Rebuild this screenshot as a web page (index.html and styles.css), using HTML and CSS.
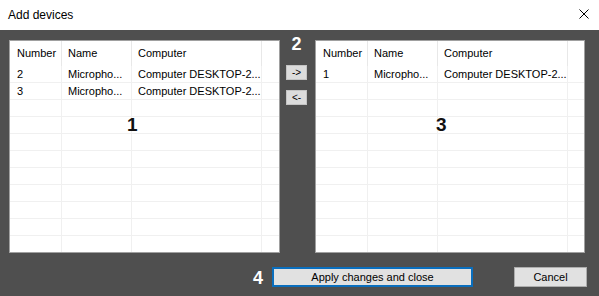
FILE: index.html
```html
<!DOCTYPE html>
<html lang="en">
<head>
<meta charset="UTF-8" />
<title>Add devices</title>
<link rel="stylesheet" href="styles.css">
</head>
<body>
<div class="window">
  <header class="titlebar">
    <span class="title">Add devices</span>
    <button class="close" aria-label="Close">
      <svg width="10" height="10" viewBox="0 0 10 10"><path d="M0.5 0.5L9.5 9.5M9.5 0.5L0.5 9.5" stroke="#000" stroke-width="1" fill="none"/></svg>
    </button>
  </header>

  <main class="content">
    <div class="lists">
      <div class="list list-left">
        <table class="grid">
          <colgroup><col class="c-num"><col class="c-name"><col class="c-comp"><col></colgroup>
          <thead>
            <tr><th>Number</th><th>Name</th><th>Computer</th><th></th></tr>
          </thead>
          <tbody>
            <tr><td>2</td><td>Micropho...</td><td>Computer DESKTOP-2...</td><td></td></tr>
            <tr><td>3</td><td>Micropho...</td><td>Computer DESKTOP-2...</td><td></td></tr>
            <tr><td></td><td></td><td></td><td></td></tr>
            <tr><td></td><td></td><td></td><td></td></tr>
            <tr><td></td><td></td><td></td><td></td></tr>
            <tr><td></td><td></td><td></td><td></td></tr>
            <tr><td></td><td></td><td></td><td></td></tr>
            <tr><td></td><td></td><td></td><td></td></tr>
            <tr><td></td><td></td><td></td><td></td></tr>
            <tr><td></td><td></td><td></td><td></td></tr>
            <tr><td></td><td></td><td></td><td></td></tr>
          </tbody>
        </table>
        <span class="marker">1</span>
      </div>

      <div class="mover">
        <span class="step">2</span>
        <button class="arrow">-&gt;</button>
        <button class="arrow">&lt;-</button>
      </div>

      <div class="list list-right">
        <table class="grid">
          <colgroup><col class="c-num"><col class="c-name"><col class="c-comp"><col></colgroup>
          <thead>
            <tr><th>Number</th><th>Name</th><th>Computer</th><th></th></tr>
          </thead>
          <tbody>
            <tr><td>1</td><td>Micropho...</td><td>Computer DESKTOP-2...</td><td></td></tr>
            <tr><td></td><td></td><td></td><td></td></tr>
            <tr><td></td><td></td><td></td><td></td></tr>
            <tr><td></td><td></td><td></td><td></td></tr>
            <tr><td></td><td></td><td></td><td></td></tr>
            <tr><td></td><td></td><td></td><td></td></tr>
            <tr><td></td><td></td><td></td><td></td></tr>
            <tr><td></td><td></td><td></td><td></td></tr>
            <tr><td></td><td></td><td></td><td></td></tr>
            <tr><td></td><td></td><td></td><td></td></tr>
            <tr><td></td><td></td><td></td><td></td></tr>
          </tbody>
        </table>
        <span class="marker">3</span>
      </div>
    </div>

    <div class="actions">
      <span class="step">4</span>
      <button class="btn apply">Apply changes and close</button>
      <button class="btn cancel">Cancel</button>
    </div>
  </main>
</div>
</body>
</html>
```

FILE: styles.css
```css
:root {
  --dark-bg: #4f4f4f;
  --button-bg: #e1e1e1;
  --button-border: #adadad;
  --grid-line: #f0f0f0;
  --focus-blue: #0a6ebd;
  --font-family: 'Liberation Sans', Arial, sans-serif;
}

* {
  box-sizing: border-box;
}

body {
  margin: 0;
  font-family: var(--font-family);
  color: #000;
  background: var(--dark-bg);
}

.window {
  width: 599px;
  height: 296px;
  display: flex;
  flex-direction: column;
  overflow: hidden;
}

.titlebar {
  height: 30px;
  background: #fff;
  display: flex;
  align-items: center;
  padding: 0 10px 0 8px;
}

.title {
  font-size: 12px;
  line-height: 14px;
  margin-top: -1px;
}

.close {
  margin-left: auto;
  border: none;
  background: none;
  padding: 0;
  width: 10px;
  height: 10px;
  display: flex;
  margin-top: -2px;
}

.content {
  flex: 1;
  background: var(--dark-bg);
  padding: 6px 14px 0 9px;
}

.lists {
  display: flex;
  align-items: flex-start;
}

.list {
  position: relative;
  height: 213px;
  margin-top: 4px;
  background: #fff;
  border: 1px solid #a0a0a0;
  overflow: hidden;
}

.list-left {
  width: 271px;
}

.list-right {
  width: 270px;
}

.grid {
  width: 100%;
  table-layout: fixed;
  border-collapse: separate;
  border-spacing: 0;
  font-size: 11px;
}

.c-num {
  width: 52px;
}

.c-name {
  width: 70px;
}

.c-comp {
  width: 130px;
}

.grid th,
.grid td {
  padding: 0 0 0 6px;
  text-align: left;
  font-weight: normal;
  white-space: nowrap;
  overflow: hidden;
  border-right: 1px solid var(--grid-line);
}

.grid th:last-child,
.grid td:last-child {
  border-right: none;
}

.grid th:first-child,
.grid td:first-child {
  padding-left: 7px;
}

.grid th {
  height: 25px;
  line-height: 25px;
  border-right-color: #e8e8e8;
}

.grid td {
  height: 17px;
  line-height: 16px;
  border-bottom: 1px solid var(--grid-line);
}

.marker {
  position: absolute;
  left: 117px;
  top: 74px;
  font-size: 19px;
  line-height: 19px;
  font-weight: 700;
  color: #111;
}

.list-right .marker {
  left: 120px;
}

.mover {
  width: 35px;
  display: flex;
  flex-direction: column;
  align-items: center;
  padding-right: 2px;
}

.step {
  font-size: 18px;
  line-height: 16px;
  font-weight: 700;
  color: #fff;
}

.arrow {
  width: 21px;
  height: 15px;
  margin-top: 13px;
  padding: 0;
  font-family: var(--font-family);
  font-size: 10px;
  line-height: 13px;
  background: #dcdcdc;
  border: 1px solid #c4c4c4;
  color: #000;
}

.arrow + .arrow {
  margin-top: 10px;
}

.actions {
  display: flex;
  align-items: center;
  justify-content: flex-end;
  margin-top: 14px;
  margin-right: -2px;
}

.actions .step {
  margin-right: 9px;
  margin-top: 2px;
}

.btn {
  height: 20px;
  padding: 0;
  font-family: var(--font-family);
  font-size: 11px;
  color: #000;
  background: var(--button-bg);
  border: 1px solid var(--button-border);
}

.apply {
  width: 201px;
  border: 2px solid var(--focus-blue);
}

.cancel {
  width: 73px;
  margin-left: 41px;
}
```
